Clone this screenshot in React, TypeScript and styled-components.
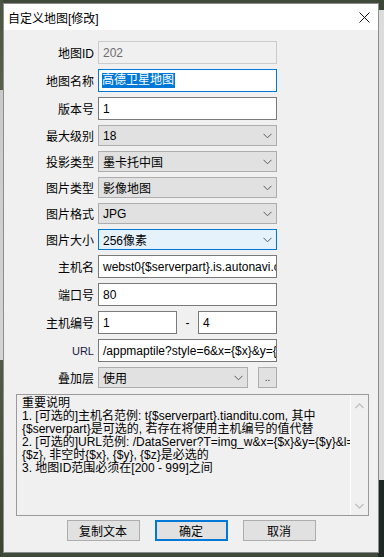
import styled, { createGlobalStyle } from 'styled-components';

const GlobalStyle = createGlobalStyle`
  html, body {
    margin: 0;
    padding: 0;
    width: 384px;
    height: 557px;
    overflow: hidden;
  }
  body {
    font-family: "Liberation Sans", "Noto Sans CJK SC", sans-serif;
    font-size: 12px;
    color: #000;
    background:
      linear-gradient(to bottom, #3b4636 0, #3b4636 10px, #dcdcdc 10px, #dcdcdc 480px, #1e2824 480px) right top / 6px 100% no-repeat,
      linear-gradient(to bottom, #4a5642 0, #56604c 90px, #c9c9c9 90px, #d4d4d4 360px, #4f5c46 360px, #3a4633 100%) left top / 3px 100% no-repeat,
      #3f4a3a;
  }
`;

const Window = styled.div`
  box-sizing: border-box;
  margin: 3px 0 0 3px;
  width: 376px;
  height: 550px;
  border: 1px solid #8d8d8d;
  background: #f0f0f0;
  display: flex;
  flex-direction: column;
`;

const TitleBar = styled.div`
  height: 26px;
  background: #fff;
  display: flex;
  align-items: center;
  justify-content: space-between;
  padding: 0 8px 0 4px;
  font-size: 12px;
`;

const CloseIcon = styled.svg`
  width: 11px;
  height: 11px;
  margin-top: 1px;
`;

const Body = styled.div`
  display: flex;
  flex-direction: column;
  padding-top: 11px;
`;

const Form = styled.div`
  display: flex;
  flex-direction: column;
  gap: 5px;
`;

const Row = styled.div`
  display: grid;
  grid-template-columns: 90px 179px;
  column-gap: 4px;
  align-items: center;
`;

const Label = styled.div<{ $latin?: boolean }>`
  text-align: right;
  font-size: ${(p) => (p.$latin ? '11px' : '12px')};
  color: ${(p) => (p.$latin ? '#1a1a40' : '#000')};
  white-space: nowrap;
`;

const TextBox = styled.div<{ $disabled?: boolean; $focused?: boolean }>`
  box-sizing: border-box;
  height: 23px;
  display: flex;
  align-items: center;
  padding-left: 4px;
  overflow: hidden;
  white-space: nowrap;
  background: ${(p) => (p.$disabled ? '#f0f0f0' : '#fff')};
  border: 1px solid ${(p) => (p.$disabled ? '#cccccc' : p.$focused ? '#0078d7' : '#7a7a7a')};
  color: ${(p) => (p.$disabled ? '#6d6d6d' : '#000')};
`;

const Selected = styled.span`
  background: #0078d7;
  color: #fff;
  line-height: 15px;
  padding-right: 1px;
  margin-left: -1px;
`;

const Combo = styled.div<{ $hot?: boolean; $width?: number }>`
  box-sizing: border-box;
  height: 21px;
  width: ${(p) => (p.$width ? `${p.$width}px` : 'auto')};
  display: flex;
  align-items: center;
  justify-content: space-between;
  padding: 0 4px 0 4px;
  background: ${(p) => (p.$hot ? '#e5f1fb' : '#e1e1e1')};
  border: 1px solid ${(p) => (p.$hot ? '#0078d7' : '#adadad')};
  white-space: nowrap;
`;

const Chevron = () => (
  <svg width="9" height="6" viewBox="0 0 9 6">
    <polyline points="0.5,0.8 4.5,4.8 8.5,0.8" fill="none" stroke="#5a5a5a" strokeWidth="1" />
  </svg>
);

const PairField = styled.div`
  display: flex;
  align-items: center;
  justify-content: space-between;
`;

const SmallBox = styled(TextBox)`
  width: 79px;
`;

const Dash = styled.span`
  width: 20px;
  text-align: center;
`;

const ComboField = styled.div`
  display: flex;
  align-items: center;
  gap: 10px;
`;

const DotButton = styled.div`
  box-sizing: border-box;
  width: 19px;
  height: 21px;
  border: 1px solid #adadad;
  background: #e1e1e1;
  display: flex;
  justify-content: center;
  align-items: flex-end;
  padding-bottom: 5px;
  font-size: 10px;
  line-height: 8px;
  color: #333;
`;

const Memo = styled.div`
  box-sizing: border-box;
  margin: 6px 0 0 12px;
  width: 353px;
  height: 122px;
  border: 1px solid #9a9a9a;
  display: flex;
  background: #f0f0f0;
`;

const MemoText = styled.div`
  flex: 1;
  padding: 2px 0 0 5px;
  white-space: pre;
  line-height: 13px;
  font-size: 12px;
  overflow: hidden;
`;

const ScrollBar = styled.div`
  width: 17px;
  border-left: 1px solid #fcfcfc;
  display: flex;
  flex-direction: column;
  justify-content: space-between;
  align-items: center;
  padding: 8px 0 6px;
`;

const ScrollArrow = ({ up }: { up?: boolean }) => (
  <svg width="9" height="6" viewBox="0 0 9 6">
    <polyline
      points={up ? '0.5,5 4.5,1 8.5,5' : '0.5,1 4.5,5 8.5,1'}
      fill="none"
      stroke="#c2c2c2"
      strokeWidth="1.4"
    />
  </svg>
);

const ButtonBar = styled.div`
  display: flex;
  justify-content: center;
  gap: 15px;
  margin-top: 4px;
`;

const Button = styled.div<{ $default?: boolean }>`
  box-sizing: border-box;
  width: 73px;
  height: 21px;
  display: flex;
  align-items: center;
  justify-content: center;
  background: #e1e1e1;
  border: ${(p) => (p.$default ? '2px solid #0078d7' : '1px solid #adadad')};
`;

const combos = [
  { label: '最大级别', value: '18' },
  { label: '投影类型', value: '墨卡托中国' },
  { label: '图片类型', value: '影像地图' },
  { label: '图片格式', value: 'JPG' },
  { label: '图片大小', value: '256像素', hot: true },
];

const notes = `重要说明
1. [可选的]主机名范例: t{$serverpart}.tianditu.com, 其中
{$serverpart}是可选的, 若存在将使用主机编号的值代替
2. [可选的]URL范例: /DataServer?T=img_w&x={$x}&y={$y}&l=
{$z}, 非空时{$x}, {$y}, {$z}是必选的
3. 地图ID范围必须在[200 - 999]之间`;

export default function App() {
  return (
    <>
      <GlobalStyle />
      <Window>
        <TitleBar>
          <span>自定义地图[修改]</span>
          <CloseIcon viewBox="0 0 11 11">
            <path d="M0.5 0.5 L10.5 10.5 M10.5 0.5 L0.5 10.5" stroke="#111" strokeWidth="1" />
          </CloseIcon>
        </TitleBar>
        <Body>
          <Form>
            <Row>
              <Label>地图ID</Label>
              <TextBox $disabled>202</TextBox>
            </Row>
            <Row>
              <Label>地图名称</Label>
              <TextBox $focused>
                <Selected>高德卫星地图</Selected>
              </TextBox>
            </Row>
            <Row>
              <Label>版本号</Label>
              <TextBox>1</TextBox>
            </Row>
            {combos.map((c) => (
              <Row key={c.label}>
                <Label>{c.label}</Label>
                <Combo $hot={c.hot}>
                  <span>{c.value}</span>
                  <Chevron />
                </Combo>
              </Row>
            ))}
            <Row>
              <Label>主机名</Label>
              <TextBox>webst0{'{$serverpart}'}.is.autonavi.com</TextBox>
            </Row>
            <Row>
              <Label>端口号</Label>
              <TextBox>80</TextBox>
            </Row>
            <Row>
              <Label>主机编号</Label>
              <PairField>
                <SmallBox>1</SmallBox>
                <Dash>-</Dash>
                <SmallBox>4</SmallBox>
              </PairField>
            </Row>
            <Row>
              <Label $latin>URL</Label>
              <TextBox>/appmaptile?style=6&amp;x={'{$x}'}&amp;y={'{$y}'}&amp;z={'{$z}'}</TextBox>
            </Row>
            <Row>
              <Label>叠加层</Label>
              <ComboField>
                <Combo $width={150}>
                  <span>使用</span>
                  <Chevron />
                </Combo>
                <DotButton>..</DotButton>
              </ComboField>
            </Row>
          </Form>
          <Memo>
            <MemoText>{notes}</MemoText>
            <ScrollBar>
              <ScrollArrow up />
              <ScrollArrow />
            </ScrollBar>
          </Memo>
          <ButtonBar>
            <Button>复制文本</Button>
            <Button $default>确定</Button>
            <Button>取消</Button>
          </ButtonBar>
        </Body>
      </Window>
    </>
  );
}
